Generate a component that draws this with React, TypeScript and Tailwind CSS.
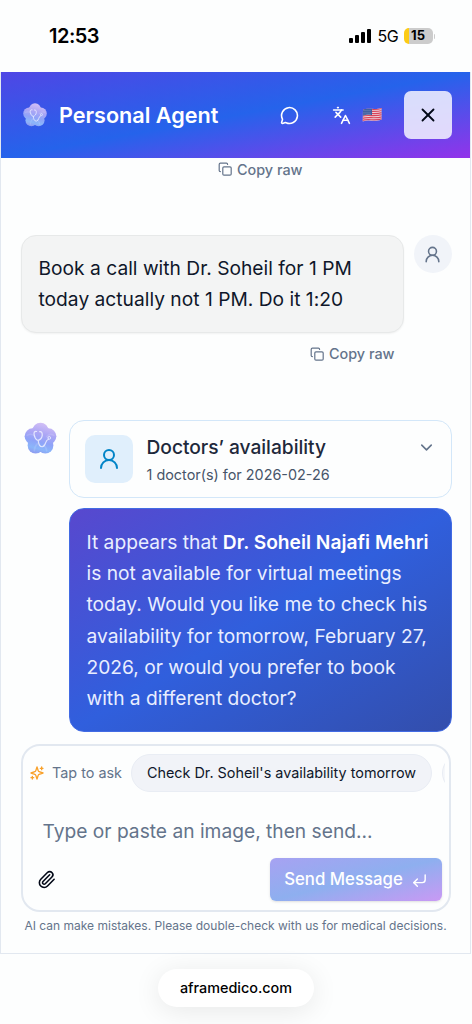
import { ChevronDown, Copy, CornerDownLeft, Languages, MessageCircle, Paperclip, UserRound, X } from "lucide-react";

function FlowerLogo({ id, className }: { id: string; className: string }) {
  const petals = [-90, -18, 54, 126, 198].map((a) => ({
    a,
    x: 17 + 8 * Math.cos((a * Math.PI) / 180),
    y: 17.4 + 8 * Math.sin((a * Math.PI) / 180),
  }));
  return (
    <svg viewBox="0 0 34 34" className={className} aria-hidden="true">
      <defs>
        <linearGradient id={id} gradientUnits="userSpaceOnUse" x1="20" y1="1" x2="12" y2="33">
          <stop offset="0" stopColor="#d6c2f6" />
          <stop offset="0.35" stopColor="#aca6f5" />
          <stop offset="0.6" stopColor="#8fa3f8" />
          <stop offset="0.8" stopColor="#8bb6fa" />
          <stop offset="1" stopColor="#8f95ee" />
        </linearGradient>
      </defs>
      {petals.map((p) => (
        <circle key={p.a} cx={p.x} cy={p.y} r="7.8" fill={`url(#${id})`} />
      ))}
      <circle cx="17" cy="17.400" r="12.600" fill={`url(#${id})`} />
      <path d="M4 14c3-2 6-1 8 1M30 14c-3-2-5-1-7 1M11 29c0-3 1-5 3-7M23 29c0-3-1-4-3-6" fill="none" stroke="#ffffff" strokeWidth="1.500" strokeLinecap="round" opacity="0.13" />
      <path
        d="M13.200 10.200c-2.200-.4-2.900 1-2.300 3.500.5 2.500 1.800 4.500 3.700 5.200 2.300-.7 3.900-2.700 4.100-5.200.1-2.500-.7-3.600-2.400-3.300M14.800 19c.2 3.500 1.500 6.200 4 6 3.800-.5 2.200-6.200 5.900-7.300"
        fill="none"
        stroke="#eef1ff"
        strokeWidth="1.200"
        strokeLinecap="round"
        opacity="0.85"
      />
      <circle cx="25.500" cy="16.400" r="1.300" fill="none" stroke="#e8edff" strokeWidth="0.9" />
    </svg>
  );
}

function Flag() {
  return (
    <svg viewBox="0 0 20 16" className="h-4 w-5" aria-hidden="true">
      <defs>
        <clipPath id="flag-wave">
          <path d="M1 3C6 .2 12 3.600 19.500 1v11.500C13 15.500 7 12 .7 14.500z" />
        </clipPath>
      </defs>
      <g clipPath="url(#flag-wave)">
        <rect width="20" height="16" fill="#efd5de" />
        {[2.2, 4.3, 6.4, 8.5, 10.6, 12.7].map((y) => (
          <path key={y} d={`M0 ${y + 0.8}C6 ${y - 1.3} 12 ${y + 1.5} 20 ${y - 0.8}`} fill="none" stroke="#d8455a" strokeWidth="1.200" />
        ))}
        <path d="M0 0h10v8.300C7 7.500 4 7.700 0 9z" fill="#41609f" />
        <g fill="#a9b8dc">
          {[2, 4, 6, 8].map((x) => [3.5, 5.3, 7].map((y) => <circle key={`${x}-${y}`} cx={x} cy={y} r="0.38" />))}
        </g>
      </g>
    </svg>
  );
}

function StatusBar() {
  return (
    <div className="flex h-[72px] shrink-0 items-center justify-between pr-[37px] pl-[49px] text-black">
      <span className="text-[20px] leading-6 font-semibold tracking-[-0.5px]">12:53</span>
      <div className="flex items-center">
        <div className="mr-[6px] flex h-[14px] items-end gap-[2px]">
          <span className="h-[5px] w-1 rounded-[1px] bg-black" />
          <span className="h-2 w-1 rounded-[1px] bg-black" />
          <span className="h-[11px] w-1 rounded-[1px] bg-black" />
          <span className="h-[14px] w-1 rounded-[1px] bg-black" />
        </div>
        <span className="mr-[5px] text-[16px] leading-5 tracking-[-0.3px]">5G</span>
        <div className="flex h-4 w-[29px] items-center justify-center rounded-[5px] bg-linear-to-r from-[#fccb16] from-[16%] to-[#cccccc] to-[16%] text-[13px] font-bold">
          15
        </div>
        <span className="ml-px h-[5px] w-[1.500px] rounded-r bg-[#cccccc]" />
      </div>
    </div>
  );
}

function Header() {
  return (
    <header className="flex h-[86px] shrink-0 items-center bg-linear-to-br/srgb from-[#4f46e5] via-[#2563eb] to-[#9333ea] pr-[18.500px] pl-[21px] text-white">
      <FlowerLogo id="brand-small" className="size-[26px]" />
      <h1 className="ml-[11px] w-[160px] text-[21.600px] leading-7 font-semibold whitespace-nowrap">Personal Agent</h1>
      <MessageCircle className="ml-[61px] size-[19px]" strokeWidth={2} />
      <Languages className="ml-[33px] size-[19px]" strokeWidth={2} />
      <div className="ml-[11px]"><Flag /></div>
      <button aria-label="Close" className="ml-auto flex size-12 items-center justify-center rounded-[7px] bg-[#f6f4ff]/85 text-[#020817]">
        <X className="size-[22px]" strokeWidth={2} />
      </button>
    </header>
  );
}

function CopyRaw() {
  return (
    <button className="flex h-[18px] items-center gap-[5px] text-[14.400px] leading-[18px] font-medium whitespace-nowrap text-[#64748b]">
      <Copy className="size-[14.400px]" strokeWidth={2} />
      Copy raw
    </button>
  );
}

function Conversation() {
  return (
    <main className="flex h-[586px] shrink-0 flex-col overflow-hidden pt-[2.500px] pr-[18.500px] pl-[19.500px]">
      <div className="flex justify-end pr-[149px]"><CopyRaw /></div>
      <div className="mt-[56.500px] flex items-start justify-between">
        <div className="h-[98px] w-[383.500px] rounded-[15px] border border-[#e7e9e9] bg-[#f3f4f4] px-[17px] pt-[17px] text-[19.200px] leading-[31.200px] tracking-[0.01px] whitespace-nowrap text-[#0f172a] shadow-xs">
          Book a call with Dr. Soheil for 1 PM<br />today actually not 1 PM. Do it 1:20
        </div>
        <div className="flex size-[38px] items-center justify-center rounded-full bg-[#f1f4f9] text-[#64748b]">
          <UserRound className="size-[19px]" strokeWidth={2} />
        </div>
      </div>
      <div className="mt-[12px] flex justify-end pr-[57px]"><CopyRaw /></div>
      <div className="mt-[57px] flex items-start justify-between">
        <FlowerLogo id="brand-message" className="mt-px ml-[2px] size-[35px]" />
        <div className="flex w-[383px] flex-col gap-[10px]">
          <div className="flex h-[78px] items-center rounded-[15px] border-[1.500px] border-[#d3e7f9] px-[15px]">
            <div className="flex size-12 shrink-0 items-center justify-center rounded-[10px] bg-[#e0effc] text-[#0284c7]">
              <UserRound className="size-6" strokeWidth={2} />
            </div>
            <div className="ml-[14px] flex flex-col gap-1 whitespace-nowrap">
              <h2 className="text-[19.200px] leading-7 font-medium tracking-[-0.02px] text-[#1e293b]">Doctors’ availability</h2>
              <p className="text-[14.400px] leading-5 text-[#475569]">1 doctor(s) for 2026-02-26</p>
            </div>
            <ChevronDown className="mt-[-24px] ml-auto size-[19px] text-[#64748b]" strokeWidth={2} />
          </div>
          <div className="h-[224px] rounded-[15px] border border-[#426be4] bg-linear-to-br/srgb from-[#5848ce] via-[#305fdd] to-[#334eac] px-[17px] pt-[18px] text-[19.200px] leading-[31.200px] whitespace-nowrap text-[#e9eeff]">
            It appears that <strong className="font-semibold text-white">Dr. Soheil Najafi Mehri</strong><br />
            is not available for virtual meetings<br />
            today. Would you like me to check his<br />
            availability for tomorrow, February 27,<br />
            2026, or would you prefer to book<br />
            with a different doctor?
          </div>
        </div>
      </div>
    </main>
  );
}

function Composer() {
  return (
    <section className="mr-[19px] ml-[20px] flex h-[168px] shrink-0 flex-col rounded-[19px] border-2 border-[#e2e8f0] pt-[8px] pr-1 pl-[6px]">
      <div className="flex h-[38px] items-center overflow-hidden whitespace-nowrap">
        <svg viewBox="0 0 24 24" className="size-[16px] shrink-0 text-[#f9a12a]" fill="none" stroke="currentColor" strokeWidth="2" strokeLinecap="round" strokeLinejoin="round" aria-hidden="true">
          <path d="m12 3-1.912 5.813a2 2 0 0 1-1.275 1.275L3 12l5.813 1.912a2 2 0 0 1 1.275 1.275L12 21l1.912-5.813a2 2 0 0 1 1.275-1.275L21 12l-5.813-1.912a2 2 0 0 1-1.275-1.275ZM5 3v4M19 17v4M3 5h4M17 19h4" transform="matrix(-1 0 0 1 24 0)" />
        </svg>
        <span className="ml-[7px] text-[14.400px] leading-5 text-[#64748b]">Tap to ask</span>
        <button className="ml-[9px] flex h-[38px] w-[301px] shrink-0 items-center justify-center rounded-full border border-[#e9edf4] bg-[#f1f3f8] text-[14.400px] text-[#0f172a]">Check Dr. Soheil's availability tomorrow</button>
        <span className="ml-[10px] h-[38px] w-20 shrink-0 rounded-full border border-[#e9edf4] bg-[#f5f7fa]" />
      </div>
      <div className="mt-[25px] ml-[13.500px] text-[19.200px] leading-7 whitespace-nowrap text-[#64748b]">Type or paste an image, then send...</div>
      <div className="mt-[13px] flex items-center justify-between">
        <Paperclip className="ml-[8px] size-[19px] text-[#020817]" strokeWidth={2} />
        <button className="mr-[3px] flex h-[43px] w-[172px] items-center justify-center gap-[8px] rounded-[6px] bg-linear-to-br/srgb from-[#a7a2f2] via-[#8eafef] to-[#c999f4] pt-px text-[16.800px] font-medium whitespace-nowrap text-white shadow-sm">
          Send Message
          <CornerDownLeft className="size-[17px]" strokeWidth={2} />
        </button>
      </div>
    </section>
  );
}

export default function App() {
  return (
    <div className="flex h-[1024px] w-[472px] flex-col overflow-hidden bg-[#fdfefe] font-['Inter','Liberation_Sans',sans-serif]">
      <StatusBar />
      <div className="flex h-[882px] w-[471px] shrink-0 flex-col border-x border-b border-[#e2e8f0]">
        <Header />
        <Conversation />
        <Composer />
        <p className="mt-[6px] text-center text-[12px] leading-4 tracking-[0.010px] whitespace-nowrap text-[#64748b]">AI can make mistakes. Please double-check with us for medical decisions.</p>
      </div>
      <footer className="flex flex-1 justify-center pt-[15px]">
        <div className="flex h-[38px] w-[156px] items-center justify-center rounded-full bg-white text-[14.400px] font-medium text-black shadow-[0_4px_28px_rgba(0,0,0,0.09)]">aframedico.com</div>
      </footer>
    </div>
  );
}
